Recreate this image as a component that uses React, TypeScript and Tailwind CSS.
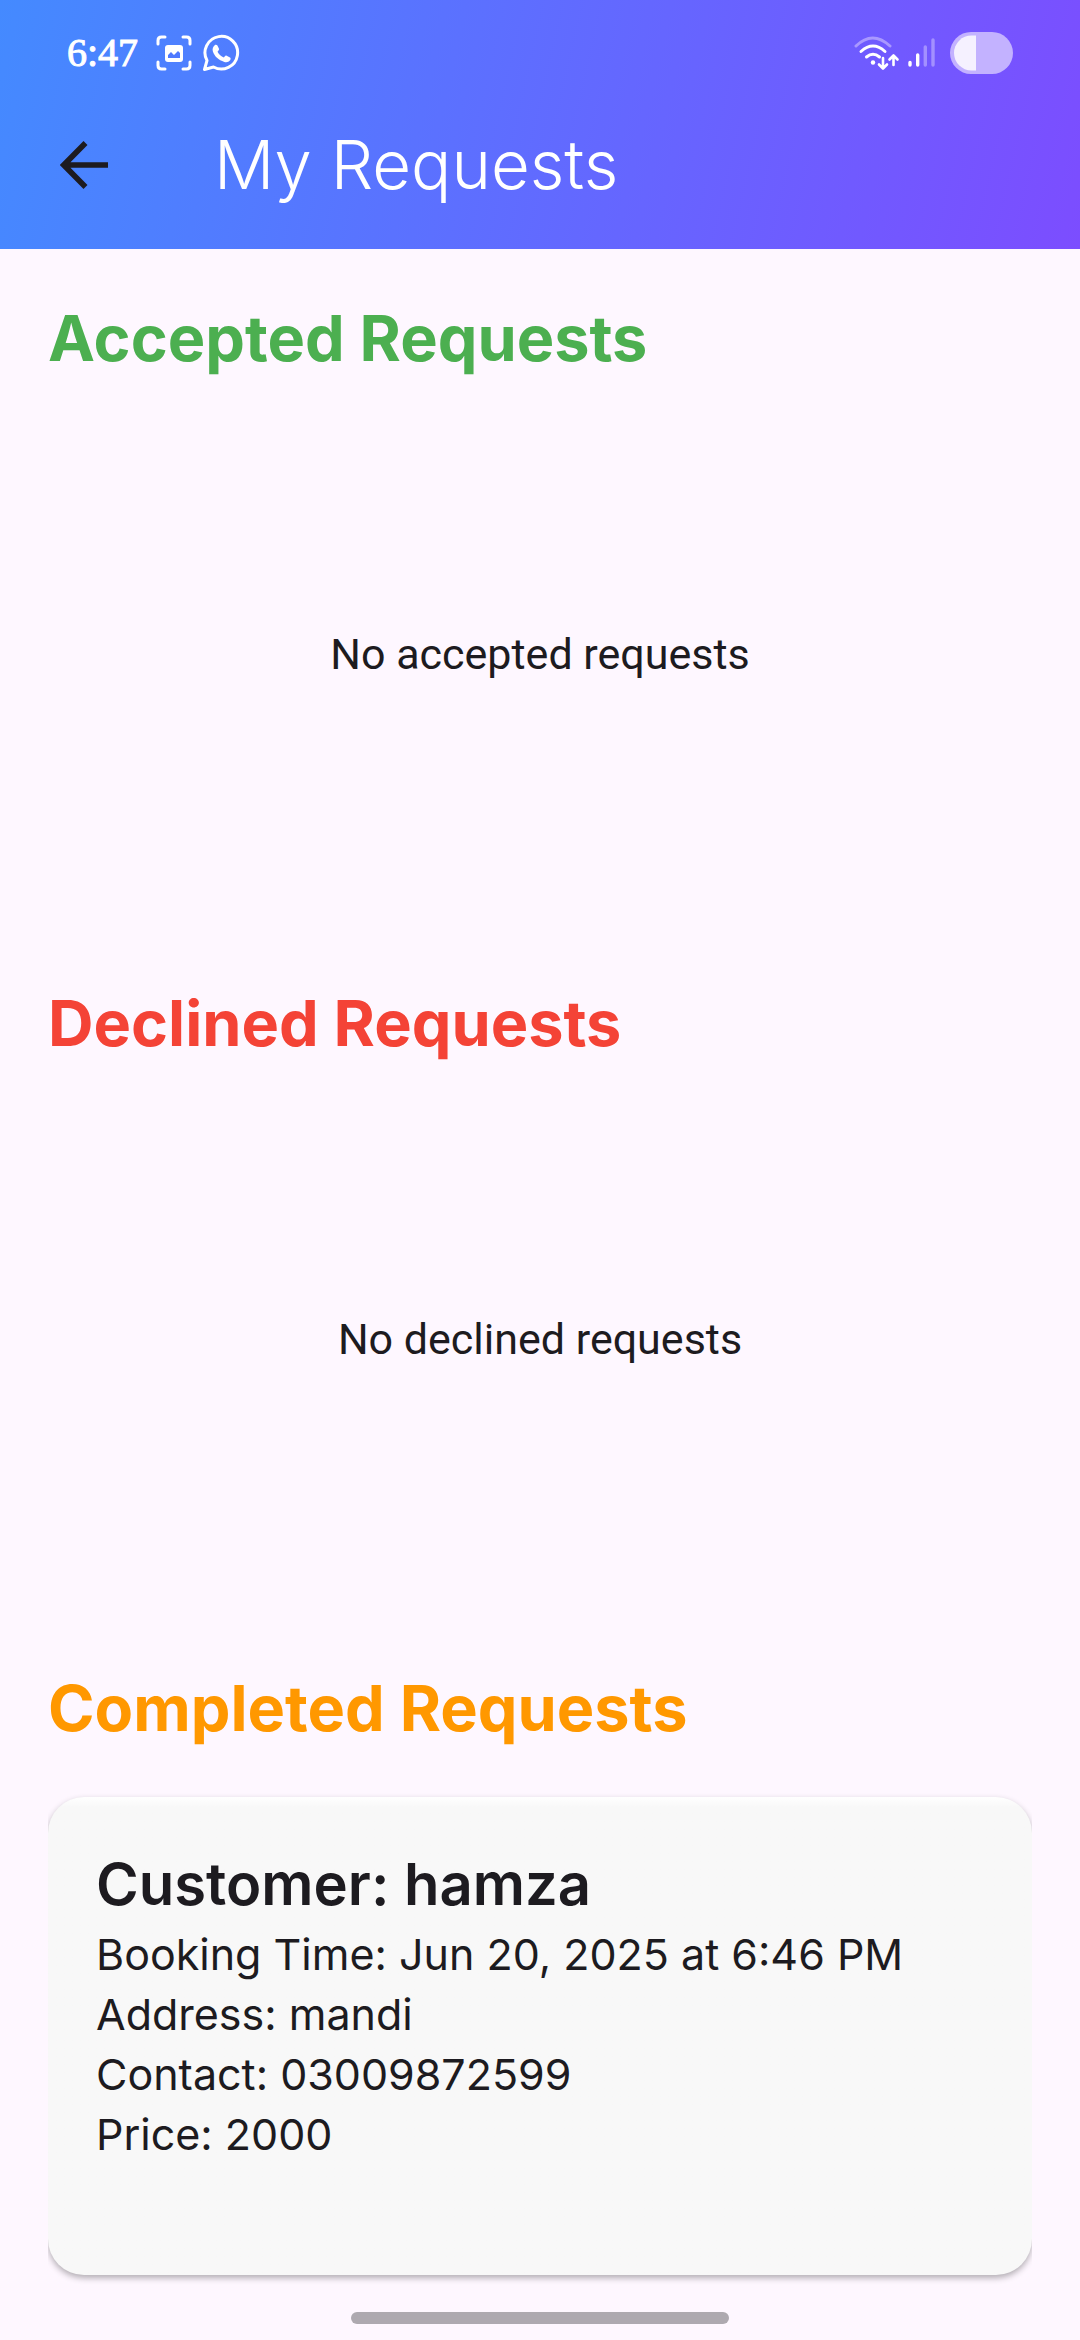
const details = [
  "Booking Time: Jun 20, 2025 at 6:46 PM",
  "Address: mandi",
  "Contact: 03009872599",
  "Price: 2000",
];

function ScreenshotIcon() {
  return (
    <svg width="36" height="36" viewBox="0 0 36 36" fill="none" aria-hidden="true">
      <g stroke="#fff" strokeWidth="3" strokeLinecap="round">
        <path d="M2 9V5.500Q2 2 5.500 2H9M27 2h3.500Q34 2 34 5.500V9M34 27v3.500Q34 34 30.500 34H27M9 34H5.500Q2 34 2 30.500V27" />
      </g>
      <rect x="9" y="10" width="18" height="17" rx="3" fill="#fff" />
      <path d="M12 23v-3l3-3 3 3 4-4 2 2v5z" fill="#4f79ff" />
    </svg>
  );
}

function WhatsAppIcon() {
  return (
    <svg width="38" height="38" viewBox="0 0 38 38" fill="none" aria-hidden="true">
      <path
        d="M2.500 35.500 5 26.500A16.300 16.300 0 1 1 11.500 33z"
        stroke="#fff"
        strokeWidth="3"
        strokeLinejoin="round"
      />
      <path
        d="M12.700 11.200c.8-.7 2.200-.6 2.700.3l1.600 3.300c.3.800-.2 1.600-1.500 3 1.600 2.900 3.600 4.700 6.400 5.800 1.300-1.700 1.900-2.200 2.700-1.900l3.400 1.700c.9.500.8 1.800.1 2.800-1.300 1.700-3.400 2.400-5.700 1.700-6-1.700-10-5.600-11.500-10.300-.8-2.500.1-4.800 1.800-6.400z"
        fill="#fff"
      />
    </svg>
  );
}

function WifiIcon() {
  return (
    <svg width="46" height="36" viewBox="0 0 46 36" fill="none" aria-hidden="true">
      <g strokeWidth="3" strokeLinecap="round">
        <path d="M2 11Q18.500-5 36 11" stroke="#a998ff" />
        <path d="M7 16.500Q19 5.500 31 16.500M12.500 22Q19 16.500 25.500 22" stroke="#fff" />
      </g>
      <circle cx="19" cy="27.500" r="2.200" fill="#fff" />
      <path
        d="M29 23v10M25 29.500l4 4 4-4M39.500 30V20.500M35.500 24.500l4-4 4 4"
        stroke="#fff"
        strokeWidth="2.600"
        strokeLinecap="round"
        strokeLinejoin="round"
      />
    </svg>
  );
}

function SignalIcon() {
  return (
    <svg width="28" height="30" viewBox="0 0 28 30" fill="none" aria-hidden="true">
      <g strokeWidth="3.400" strokeLinecap="round">
        <path d="M2 24.500V27M9.700 17V27" stroke="#fff" />
        <path d="M17.300 9V27M25 2V27" stroke="#a390ff" />
      </g>
    </svg>
  );
}

function BatteryIcon() {
  return (
    <svg width="64" height="42" viewBox="0 0 64 42" aria-hidden="true">
      <rect width="63" height="42" rx="21" fill="#c3b2ff" />
      <path d="M26 3.500H21.500a17.500 17.500 0 0 0 0 35H26z" fill="#f5f1ff" />
    </svg>
  );
}

function BackArrow() {
  return (
    <svg width="48" height="48" viewBox="0 0 48 48" fill="none" aria-hidden="true">
      <path d="M25.500 2 3.800 24 25.500 46M4 24H48" stroke="#1d1b20" strokeWidth="5.600" />
    </svg>
  );
}

function SectionTitle({ title, color }: { title: string; color: string }) {
  return <h2 className={`text-[63px] leading-[82px] font-bold ${color}`}>{title}</h2>;
}

function EmptySection({ title, color, message }: { title: string; color: string; message: string }) {
  return (
    <section className="mb-[61px]">
      <SectionTitle title={title} color={color} />
      <p className="mt-2 flex h-[534px] items-center justify-center font-['Roboto',sans-serif] text-[43px] leading-[60px]">
        {message}
      </p>
    </section>
  );
}

export default function App() {
  return (
    <div className="flex min-h-screen flex-col bg-[#fef7ff] font-['Inter',sans-serif] text-[#1d1b20]">
      <header className="bg-[linear-gradient(103deg,#448aff,#7c4dff)] pb-7 text-white">
        <div className="flex h-[105px] items-center justify-between pr-[66px] pl-[67px]">
          <div className="flex items-center">
            <span className="mr-[18px] font-['Liberation_Serif',serif] text-[40px] leading-10 [-webkit-text-stroke:1px_#fff]">
              6:47
            </span>
            <ScreenshotIcon />
            <span className="ml-[10px]"><WhatsAppIcon /></span>
          </div>
          <div className="flex items-center">
            <WifiIcon />
            <span className="mr-3.5 ml-2"><SignalIcon /></span>
            <BatteryIcon />
          </div>
        </div>
        <div className="flex h-[116px] items-center pt-1 pl-[60px]">
          <button type="button" aria-label="Back">
            <BackArrow />
          </button>
          <h1 className="ml-[106px] text-[67px] leading-[96px] font-light">My Requests</h1>
        </div>
      </header>

      <main className="flex-1 px-12 pt-12">
        <EmptySection title="Accepted Requests" color="text-[#4caf50]" message="No accepted requests" />
        <EmptySection title="Declined Requests" color="text-[#f44336]" message="No declined requests" />
        <section>
          <SectionTitle title="Completed Requests" color="text-[#ff9800]" />
          <article className="mt-12 rounded-[36px] bg-[#f8f8f8] bg-linear-to-b from-white to-[#f8f8f8] to-[10px] px-12 pt-12 pb-[111px] shadow-[0_3px_6px_rgba(0,0,0,0.3)] [clip-path:inset(-12px_0)]">
            <h3 className="text-[58px] leading-[79px] font-semibold">Customer: hamza</h3>
            {details.map((line) => (
              <p key={line} className="text-[43px] leading-[60px]">{line}</p>
            ))}
          </article>
        </section>
      </main>

      <footer className="flex justify-center pt-9 pb-4">
        <div className="h-3 w-[35%] rounded-full bg-[#aea9b0]" />
      </footer>
    </div>
  );
}
